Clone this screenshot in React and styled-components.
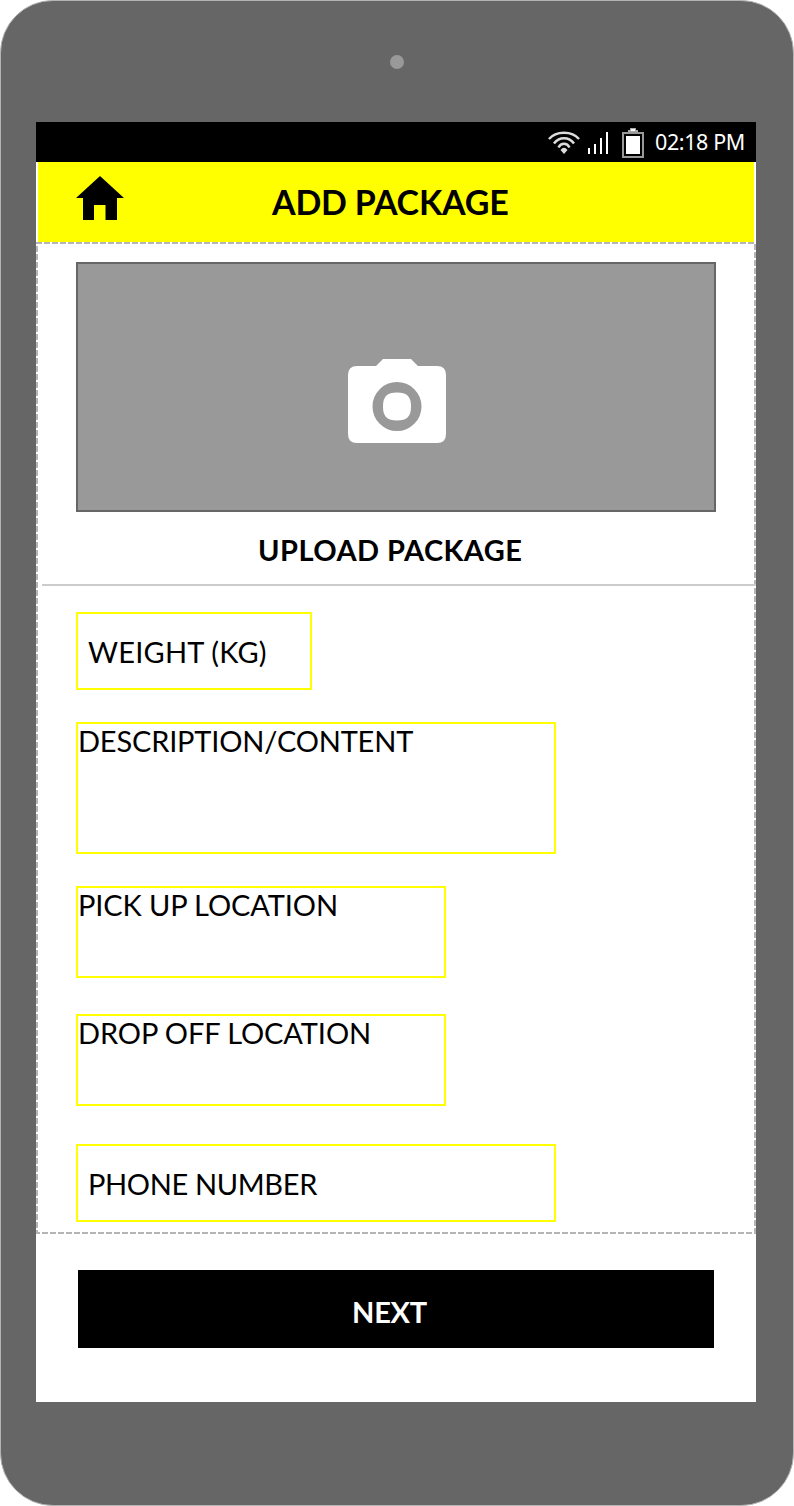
import React from "react";
import styled, { createGlobalStyle } from "styled-components";

const GlobalStyle = createGlobalStyle`
  * { box-sizing: border-box; }
  body { margin: 0; background: #fff; font-family: Lato, "Liberation Sans", sans-serif; color: #000; }
`;

const Device = styled.main`
  display: flex;
  flex-direction: column;
  align-items: center;
  width: 794px;
  height: 1506px;
  padding-right: 2px;
  background: #666;
  border: 1px solid #b4b4b4;
  border-radius: 53px;
`;

const Bezel = styled.div`
  display: flex;
  justify-content: center;
  width: 720px;
  height: 121px;
  padding: 53.5px 0 0 2px;
`;

const Lens = styled.div`
  width: 14px;
  height: 14px;
  border-radius: 50%;
  background: #999;
`;

const Screen = styled.div`
  display: flex;
  flex-direction: column;
  width: 720px;
  height: 1280px;
  background: #fff;
`;

const StatusBar = styled.div`
  display: flex;
  justify-content: flex-end;
  height: 40px;
  padding-right: 11px;
  background: #000;
`;

const Clock = styled.time`
  width: 90px;
  margin-left: 11px;
  font: 21.5px/40px "Noto Sans", sans-serif;
  letter-spacing: -0.4px;
  white-space: nowrap;
  color: #fff;
`;

const Header = styled.header`
  display: flex;
  height: 80px;
  margin: 0 2px;
  padding-left: 38px;
  background: #ff0;
`;

const Text = styled.span`
  font-size: ${(p) => p.$size || 29}px;
  font-weight: ${(p) => (p.$bold ? 700 : 400)};
  line-height: 36px;
  letter-spacing: ${(p) => p.$tracking || 0}px;
  white-space: nowrap;
`;

const Title = styled.h1`
  margin: 22px 0 0 148px;
  line-height: 36px;
`;

const Content = styled.section`
  height: 992px;
  padding-top: 20px;
  background:
    repeating-linear-gradient(90deg, #b5b5b5 0 6px, transparent 6px 8px) 0 0 / 720px 2px no-repeat,
    repeating-linear-gradient(90deg, #b5b5b5 0 4px, transparent 4px 6px, #b5b5b5 6px 8px) 0 100% / 720px 2px no-repeat,
    repeating-linear-gradient(180deg, #b5b5b5 0 2px, transparent 2px 4px, #b5b5b5 4px 8px) 0 0 / 2px 992px no-repeat,
    repeating-linear-gradient(180deg, transparent 0 2px, #b5b5b5 2px 8px) 100% 0 / 2px 992px no-repeat;
`;

const PhotoBox = styled.div`
  display: flex;
  justify-content: center;
  width: 640px;
  height: 250px;
  margin-left: 40px;
  padding: 95px 0 0 2px;
  border: 2px solid #666;
  background: #999;
`;

const Caption = styled.div`
  display: flex;
  height: 72px;
  padding: 20px 0 0 222px;
`;

const Divider = styled.hr`
  height: 2px;
  margin: 0 0 0 6px;
  border: 0;
  background: #ccc;
`;

const Form = styled.form`
  display: flex;
  flex-direction: column;
  align-items: flex-start;
  padding: 26px 0 0 40px;
`;

const Field = styled.label`
  display: flex;
  align-items: ${(p) => (p.$centered ? "center" : "flex-start")};
  width: ${(p) => p.$width}px;
  height: ${(p) => p.$height}px;
  margin-bottom: ${(p) => p.$gap}px;
  padding-left: ${(p) => (p.$centered ? 10 : 0)}px;
  padding-top: ${(p) => (p.$centered ? 2 : 0)}px;
  border: 2px solid #ff0;

  span {
    line-height: ${(p) => (p.$centered ? 36 : 34)}px;
  }
`;

const NextButton = styled.button`
  width: 636px;
  height: 78px;
  margin: 36px 0 0 42px;
  padding: 6px 0 0 274px;
  border: 0;
  background: #000;
  color: #fff;
  font-family: inherit;
  text-align: left;
`;

const WifiIcon = styled.svg`
  width: 32px;
  height: 24px;
  margin: 8px 8px 0 0;
`;

const SignalIcon = styled.svg`
  width: 21px;
  height: 22px;
  margin: 10px 13px 0 0;
`;

const BatteryIcon = styled.svg`
  width: 22px;
  height: 30px;
  margin-top: 6px;
`;

const HomeIcon = styled.svg`
  width: 48px;
  height: 44px;
  margin-top: 14px;
`;

const CameraIcon = styled.svg`
  width: 98px;
  height: 84px;
`;

const fields = [
  { label: "WEIGHT (KG)", width: 236, height: 78, gap: 32, centered: true, tracking: 0.2 },
  { label: "DESCRIPTION/CONTENT", width: 480, height: 132, gap: 32, tracking: -0.18 },
  { label: "PICK UP LOCATION", width: 370, height: 92, gap: 36, tracking: -0.1 },
  { label: "DROP OFF LOCATION", width: 370, height: 92, gap: 38, tracking: -0.1 },
  { label: "PHONE NUMBER", width: 480, height: 78, gap: 0, centered: true, tracking: -0.35 },
];

export default function App() {
  return (
    <>
      <GlobalStyle />
      <Device>
        <Bezel><Lens /></Bezel>
        <Screen>
          <StatusBar>
            <WifiIcon viewBox="0 0 32 24" fill="none" stroke="#ddd" strokeWidth="2.5">
              <path d="M1 9C8 0.500 24 0.500 31 9M6 13.500C11 6.500 21 6.500 26 13.500M10.500 17.500C13 12.500 19 12.500 21.500 17.500" />
              <path d="M12.500 20Q16 15.500 19.500 20L16 24Z" fill="#ddd" stroke="none" />
            </WifiIcon>
            <SignalIcon viewBox="0 0 21 22" fill="#fff">
              <path d="M0 16h2v6H0zM6 12h2v10H6zM12 6h2v16h-2zM18 0h2v22h-2z" />
            </SignalIcon>
            <BatteryIcon viewBox="0 0 22 30">
              <path d="M8 0h6v2h2v3H6V2h2z" fill="#aaa" />
              <path d="M9 1h4v2H9z" fill="#fff" />
              <rect x="1" y="5" width="20" height="24" fill="none" stroke="#999" strokeWidth="2" />
              <rect x="4" y="8" width="14" height="18" fill="#fff" />
            </BatteryIcon>
            <Clock>02:18 PM</Clock>
          </StatusBar>
          <Header>
            <HomeIcon viewBox="0 0 48 44">
              <path d="M24 0 48 22H41V44H29.500V29H18V44H7V22H0Z" />
            </HomeIcon>
            <Title><Text $size={34} $bold $tracking={-0.2}>ADD PACKAGE</Text></Title>
          </Header>
          <Content>
            <PhotoBox>
              <CameraIcon viewBox="0 0 98 84" fill="#fff">
                <path fillRule="evenodd" d="M35 0H63L70 7H89Q98 7 98 16V75Q98 84 89 84H9Q0 84 0 75V16Q0 7 9 7H28ZM49 23A24.500 24.500 0 1 0 49 72A24.500 24.500 0 1 0 49 23Z" />
                <path d="M49 33.500C59 33.500 63 37.500 63 47.500S59 61.500 49 61.500 35 57.500 35 47.500 39 33.500 49 33.500Z" />
              </CameraIcon>
            </PhotoBox>
            <Caption><Text $bold $tracking={0.45}>UPLOAD PACKAGE</Text></Caption>
            <Divider />
            <Form>
              {fields.map((f) => (
                <Field key={f.label} $width={f.width} $height={f.height} $gap={f.gap} $centered={f.centered}>
                  <Text $tracking={f.tracking}>{f.label}</Text>
                </Field>
              ))}
            </Form>
          </Content>
          <NextButton><Text $bold $tracking={-0.2}>NEXT</Text></NextButton>
        </Screen>
      </Device>
    </>
  );
}
